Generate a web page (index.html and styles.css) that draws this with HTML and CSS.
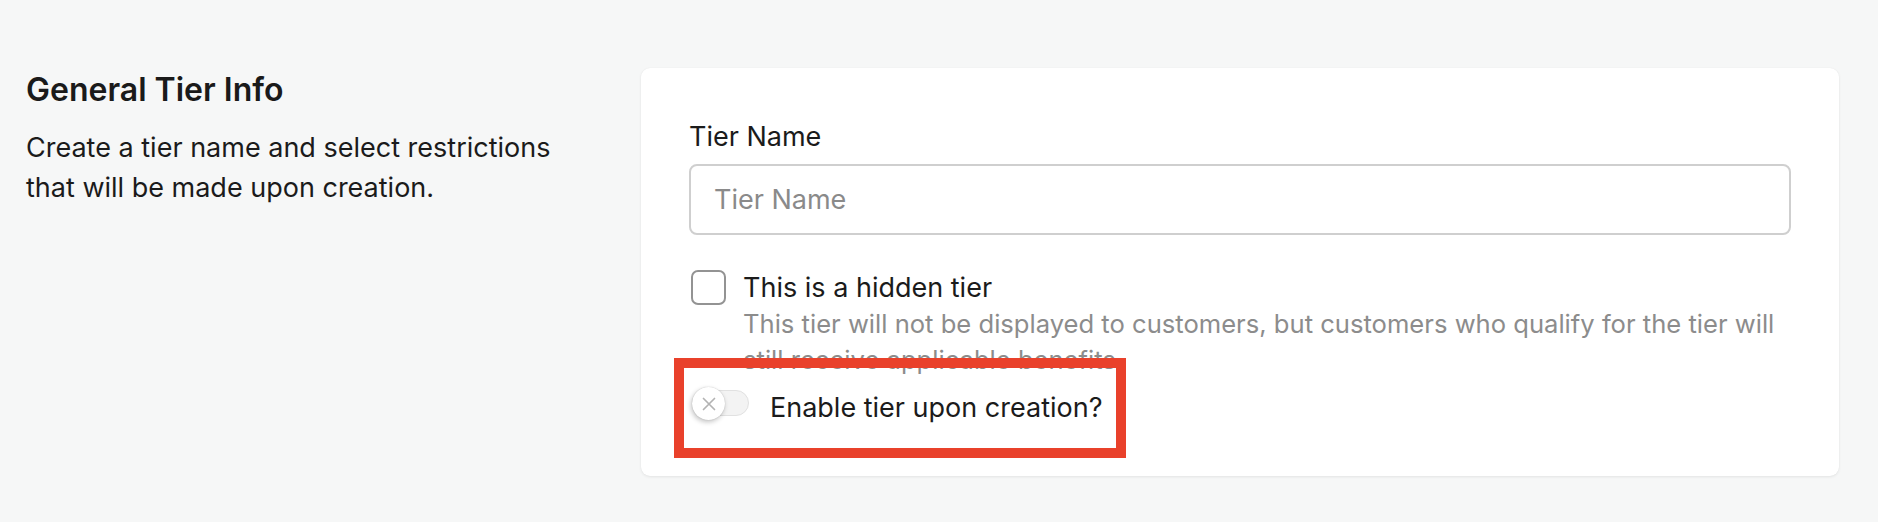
FILE: index.html
```html
<!DOCTYPE html>
<html lang="en">
<head>
<meta charset="utf-8">
<title>General Tier Info</title>
<link rel="stylesheet" href="styles.css">
</head>
<body>
<div class="page">
  <section class="intro">
    <h2 class="intro-title">General Tier Info</h2>
    <p class="intro-text">Create a tier name and select restrictions that will be made upon creation.</p>
  </section>
  <section class="card">
    <label class="field-label" for="tier-name">Tier Name</label>
    <input class="text-input" id="tier-name" type="text" placeholder="Tier Name">
    <div class="check-row">
      <span class="checkbox"></span>
      <div class="check-body">
        <div class="check-title">This is a hidden tier</div>
        <div class="check-help">This tier will not be displayed to customers, but customers who qualify for the tier will still receive applicable benefits.</div>
      </div>
    </div>
    <div class="toggle-row">
      <span class="toggle">
        <span class="knob">
          <svg viewBox="0 0 20 20" width="20" height="20"><path d="M4.5 4.5 L15.5 15.5 M15.5 4.5 L4.5 15.5" stroke="#b3b3b3" stroke-width="1.7" stroke-linecap="round" fill="none"/></svg>
        </span>
      </span>
      <span class="toggle-label">Enable tier upon creation?</span>
      <span class="highlight"></span>
    </div>
  </section>
</div>
</body>
</html>
```
FILE: styles.css
```css
* { box-sizing: border-box; }
html, body { margin: 0; padding: 0; }
body {
  background: #f6f7f7;
  font-family: Inter, "Noto Sans", sans-serif;
  color: #1b1b1b;
  width: 1878px;
  height: 522px;
  overflow: hidden;
}
.page {
  display: flex;
  gap: 40px;
  padding: 68px 39px 0 26px;
}
.intro {
  width: 575px;
  flex: none;
  margin-top: 3px;
}
.intro-title {
  margin: 0;
  font-size: 32px;
  font-weight: 600;
  line-height: 38px;
  color: #1a1a1a;
}
.intro-text {
  margin: 19px 0 0;
  font-size: 27px;
  line-height: 40px;
  width: 560px;
}
.card {
  flex: 1;
  background: #fff;
  border-radius: 9px;
  box-shadow: 0 1px 3px rgba(0,0,0,0.08), 0 0 1px rgba(0,0,0,0.06);
  padding: 51px 48px 50px;
  display: flex;
  flex-direction: column;
  align-items: flex-start;
}
.field-label {
  display: block;
  font-size: 27px;
  line-height: 36px;
}
.text-input {
  margin-top: 9px;
  width: 100%;
  height: 71px;
  border: 2px solid #cfcfcf;
  border-radius: 8px;
  padding: 0 23px;
  font-family: inherit;
  font-size: 27px;
  color: #1b1b1b;
  background: #fff;
  outline: none;
}
.text-input::placeholder { color: #8a8a8a; }
.check-row {
  margin-top: 35px;
  display: flex;
  align-items: flex-start;
  gap: 17px;
  width: 100%;
}
.checkbox {
  flex: none;
  width: 35px;
  height: 35px;
  margin-left: 2px;
  border: 2px solid #939393;
  border-radius: 7px;
  background: #fff;
}
.check-body { flex: 1; }
.check-title {
  font-size: 27px;
  line-height: 36px;
}
.check-help {
  font-size: 25.6px;
  line-height: 36px;
  color: #8c8c8c;
}
.toggle-row {
  position: relative;
  margin-top: 12px;
  display: inline-flex;
  align-items: flex-start;
  gap: 21px;
}
.toggle {
  position: relative;
  flex: none;
  width: 57px;
  height: 26px;
  margin-left: 3px;
  border-radius: 13px;
  background: #f3f3f3;
  border: 1px solid #e1e1e1;
}
.knob {
  position: absolute;
  left: -1px;
  top: -4px;
  width: 33px;
  height: 33px;
  border-radius: 50%;
  background: #fff;
  box-shadow: -1px 2px 5px rgba(0,0,0,0.24), 0 0 1px rgba(0,0,0,0.25);
  display: flex;
  align-items: center;
  justify-content: center;
}
.toggle-label {
  font-size: 27px;
  line-height: 36px;
}
.highlight {
  position: absolute;
  top: -32px;
  bottom: -32px;
  left: -15px;
  right: -24px;
  border: 10px solid #e9412b;
  pointer-events: none;
}
```
